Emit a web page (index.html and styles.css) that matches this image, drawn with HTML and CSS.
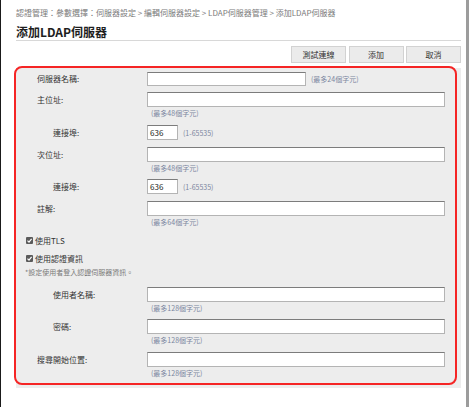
FILE: index.html
```html
<!DOCTYPE html>
<html lang="zh-Hant">
<head>
<meta charset="utf-8">
<title>添加LDAP伺服器</title>
<link rel="stylesheet" href="styles.css">
</head>
<body>
<div class="window">
  <div class="page">
    <div class="crumb">認證管理：參數選擇：伺服器設定 &gt; 編輯伺服器設定 &gt; LDAP伺服器管理 &gt; 添加LDAP伺服器</div>
    <h1 class="title">添加LDAP伺服器</h1>
    <div class="actions">
      <button class="btn">測試連線</button>
      <button class="btn">添加</button>
      <button class="btn">取消</button>
    </div>
    <div class="panel">
      <div class="field f1">
        <span class="lbl">伺服器名稱:</span>
        <div class="ctl inline"><span class="input w-name"></span><span class="hint side">(最多24個字元)</span></div>
      </div>
      <div class="field f2">
        <span class="lbl">主位址:</span>
        <div class="ctl"><span class="input w-full"></span><span class="hint">(最多48個字元)</span></div>
      </div>
      <div class="field f3">
        <span class="lbl sub">連接埠:</span>
        <div class="ctl inline"><span class="input w-port">636</span><span class="hint side">(1-65535)</span></div>
      </div>
      <div class="field f4">
        <span class="lbl">次位址:</span>
        <div class="ctl"><span class="input w-full"></span><span class="hint">(最多48個字元)</span></div>
      </div>
      <div class="field f5">
        <span class="lbl sub">連接埠:</span>
        <div class="ctl inline"><span class="input w-port">636</span><span class="hint side">(1-65535)</span></div>
      </div>
      <div class="field f6">
        <span class="lbl">註解:</span>
        <div class="ctl"><span class="input w-full"></span><span class="hint">(最多64個字元)</span></div>
      </div>
      <div class="check c1">
        <span class="box"><svg viewBox="0 0 7 7" width="7" height="7"><path d="M1.5 3.6 L3 5.1 L5.6 1.8" fill="none" stroke="#fff" stroke-width="1.2"/></svg></span>
        <span>使用TLS</span>
      </div>
      <div class="check c2">
        <span class="box"><svg viewBox="0 0 7 7" width="7" height="7"><path d="M1.5 3.6 L3 5.1 L5.6 1.8" fill="none" stroke="#fff" stroke-width="1.2"/></svg></span>
        <span>使用認證資訊</span>
      </div>
      <div class="note">*設定使用者登入認證伺服器資訊。</div>
      <div class="field f7">
        <span class="lbl sub">使用者名稱:</span>
        <div class="ctl"><span class="input w-full"></span><span class="hint">(最多128個字元)</span></div>
      </div>
      <div class="field f8">
        <span class="lbl sub">密碼:</span>
        <div class="ctl"><span class="input w-full"></span><span class="hint">(最多128個字元)</span></div>
      </div>
      <div class="field f9">
        <span class="lbl">搜尋開始位置:</span>
        <div class="ctl"><span class="input w-full"></span><span class="hint">(最多128個字元)</span></div>
      </div>
    </div>
  </div>
  <div class="highlight"></div>
</div>
</body>
</html>
```

FILE: styles.css
```css
html, body {
  margin: 0;
  padding: 0;
  background: #fff;
}
body {
  font-family: "Noto Sans CJK TC", "Noto Sans", sans-serif;
  color: #333;
}
.window {
  position: relative;
  width: 469px;
  height: 407px;
  box-sizing: border-box;
  border-left: 1px solid #1a1a1a;
  border-right: 3px solid #9c9c9c;
  overflow: hidden;
}
.page {
  padding: 0 5px 0 15px;
}
.crumb {
  margin-top: 8px;
  font-size: 8px;
  line-height: 10px;
  color: #7a7a7a;
  white-space: nowrap;
}
.title {
  margin: 6px 0 0;
  font-size: 12px;
  line-height: 16px;
  font-weight: bold;
  color: #1e1e1e;
  border-bottom: 1px solid #d8d8d8;
}
.actions {
  display: flex;
  justify-content: flex-end;
  gap: 2.5px;
  margin-top: 5px;
  padding-right: 0;
}
.btn {
  width: 55px;
  height: 17px;
  padding: 0;
  margin: 0;
  box-sizing: border-box;
  border: 1px solid #d2d2d2;
  background: #ebebeb;
  font-family: inherit;
  font-size: 8px;
  color: #333;
  line-height: 15px;
}
.panel {
  margin-top: 5px;
  background: #ededed;
  padding: 4px 0 9px;
  display: flex;
  flex-direction: column;
}
.field {
  display: grid;
  grid-template-columns: 131px 1fr;
  align-items: start;
}
.lbl {
  padding-left: 21px;
  font-size: 8px;
  line-height: 15px;
  color: #333;
  white-space: nowrap;
}
.lbl.sub {
  padding-left: 37px;
}
.ctl {
  display: flex;
  flex-direction: column;
}
.ctl.inline {
  flex-direction: row;
  align-items: center;
}
.input {
  display: block;
  height: 15px;
  box-sizing: border-box;
  background: #fff;
  border: 1px solid #b4b4b4;
  border-top-color: #7c7c7c;
  font-size: 8px;
  line-height: 13px;
  padding-left: 2px;
  color: #222;
}
.w-name { width: 159px; height: 14px; }
.w-full { width: 298px; }
.w-port { width: 31px; }
.hint {
  font-size: 7px;
  line-height: 12px;
  color: #7b86a0;
  padding-left: 4px;
  white-space: nowrap;
}
.hint.side {
  padding-left: 5px;
}
.f1 .lbl { line-height: 14px; }
.f2 { margin-top: 6.3px; }
.f3 { margin-top: 6px; }
.f4 { margin-top: 7px; }
.f5 { margin-top: 5px; }
.f6 { margin-top: 6.7px; }
.check {
  display: flex;
  align-items: center;
  gap: 2px;
  padding-left: 10px;
  font-size: 8px;
  line-height: 11px;
  color: #333;
}
.c1 { margin-top: 7.2px; }
.c2 { margin-top: 6.6px; }
.box {
  display: block;
  width: 7px;
  height: 7px;
  background: #5a5a5a;
  border-radius: 1px;
}
.box svg { display: block; }
.note {
  margin-top: 3.5px;
  padding-left: 9px;
  font-size: 7px;
  line-height: 10px;
  color: #7a7a7a;
}
.f7 { margin-top: 9.4px; }
.f8 { margin-top: 5.6px; }
.f9 { margin-top: 6px; }
.highlight {
  position: absolute;
  left: 13px;
  top: 66px;
  width: 443px;
  height: 319px;
  box-sizing: border-box;
  border: 2px solid #f52525;
  border-radius: 8px;
  pointer-events: none;
}
```
